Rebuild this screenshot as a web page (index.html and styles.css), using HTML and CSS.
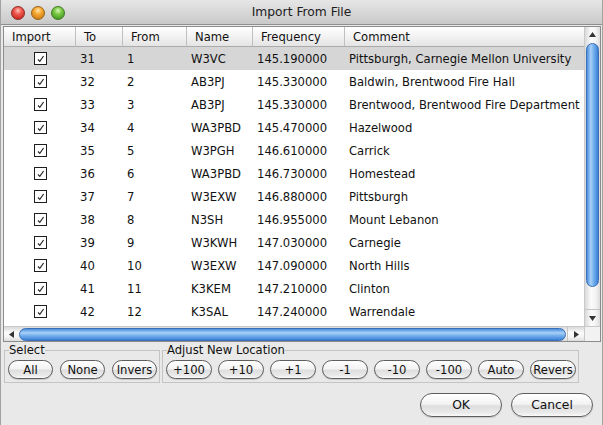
FILE: index.html
```html
<!DOCTYPE html>
<html lang="en">
<head>
    <meta charset="UTF-8">
    <title>Import From File</title>
    <link rel="stylesheet" href="styles.css">
</head>
<body>
    <div class="window">
        <div class="titlebar">
            <div class="lights">
                <span class="light red"></span>
                <span class="light yellow"></span>
                <span class="light green"></span>
            </div>
            <div class="title">Import From File</div>
        </div>

        <div class="content">
            <div class="listbox">
                <div class="viewport">
                    <table class="grid">
                        <thead>
                            <tr>
                                <th class="c-import">Import</th>
                                <th class="c-to">To</th>
                                <th class="c-from">From</th>
                                <th class="c-name">Name</th>
                                <th class="c-freq">Frequency</th>
                                <th class="c-comment">Comment</th>
                            </tr>
                        </thead>
                        <tbody id="rows"></tbody>
                    </table>
                </div>
                <div class="vscroll">
                    <div class="varrow"><svg width="7" height="5"><polygon points="0,5 7,5 3.5,0" fill="#333"/></svg></div>
                    <div class="vtrack"><div class="vthumb"></div></div>
                    <div class="varrow down"><svg width="7" height="5"><polygon points="0,0 7,0 3.5,5" fill="#333"/></svg></div>
                </div>
                <div class="hscroll">
                    <div class="harrow"><svg width="5" height="7"><polygon points="5,0 5,7 0,3.5" fill="#333"/></svg></div>
                    <div class="htrack"><div class="hthumb"></div></div>
                    <div class="harrow right"><svg width="5" height="7"><polygon points="0,0 0,7 5,3.5" fill="#333"/></svg></div>
                </div>
                <div class="corner"></div>
            </div>

            <div class="groups">
                <fieldset class="group">
                    <legend>Select</legend>
                    <div class="btns">
                        <button class="pill">All</button>
                        <button class="pill">None</button>
                        <button class="pill">Invers</button>
                    </div>
                </fieldset>
                <fieldset class="group adjust">
                    <legend>Adjust New Location</legend>
                    <div class="btns">
                        <button class="pill">+100</button>
                        <button class="pill">+10</button>
                        <button class="pill">+1</button>
                        <button class="pill">-1</button>
                        <button class="pill">-10</button>
                        <button class="pill">-100</button>
                        <button class="pill">Auto</button>
                        <button class="pill">Revers</button>
                    </div>
                </fieldset>
            </div>

            <div class="footer">
                <button class="pill big">OK</button>
                <button class="pill big">Cancel</button>
            </div>
        </div>
    </div>

    <script>
        const channels = [
            [31, 1, 'W3VC', '145.190000', 'Pittsburgh, Carnegie Mellon University'],
            [32, 2, 'AB3PJ', '145.330000', 'Baldwin, Brentwood Fire Hall'],
            [33, 3, 'AB3PJ', '145.330000', 'Brentwood, Brentwood Fire Department'],
            [34, 4, 'WA3PBD', '145.470000', 'Hazelwood'],
            [35, 5, 'W3PGH', '146.610000', 'Carrick'],
            [36, 6, 'WA3PBD', '146.730000', 'Homestead'],
            [37, 7, 'W3EXW', '146.880000', 'Pittsburgh'],
            [38, 8, 'N3SH', '146.955000', 'Mount Lebanon'],
            [39, 9, 'W3KWH', '147.030000', 'Carnegie'],
            [40, 10, 'W3EXW', '147.090000', 'North Hills'],
            [41, 11, 'K3KEM', '147.210000', 'Clinton'],
            [42, 12, 'K3SAL', '147.240000', 'Warrendale']
        ];

        const tick = '<span class="check"><svg width="11" height="11"><path d="M3 6.5 L4.8 8.3 L8.6 3" fill="none" stroke="#2a2a2a" stroke-width="1.2"/></svg></span>';

        document.getElementById('rows').innerHTML = channels
            .map((c, i) => `<tr class="${i === 0 ? 'selected' : ''}">
                <td class="mid">${tick}</td>
                <td>${c[0]}</td>
                <td>${c[1]}</td>
                <td>${c[2]}</td>
                <td>${c[3]}</td>
                <td>${c[4]}</td>
            </tr>`)
            .join('');
    </script>
</body>
</html>
```

FILE: styles.css
```css
body {
    margin: 0;
    font-family: "DejaVu Sans", sans-serif;
    font-size: 11.6px;
    color: #111;
    background: #e9e9e9;
}
.window {
    width: 603px;
    height: 425px;
    box-sizing: border-box;
    border-left: 1px solid #a2a2a2;
    border-right: 1px solid #a2a2a2;
    background: #e9e9e9;
    overflow: hidden;
}
.titlebar {
    height: 24px;
    border-bottom: 1px solid #8e8e8e;
    background: linear-gradient(#e6e6e6, #c9c9c9);
    display: grid;
    grid-template-columns: 1fr auto 1fr;
    align-items: center;
}
.lights {
    display: flex;
    gap: 6px;
    padding-left: 10px;
    padding-top: 2px;
}
.light {
    width: 14px;
    height: 14px;
    border-radius: 50%;
    box-sizing: border-box;
}
.red {
    background: radial-gradient(circle at 50% 30%, #ffc0b8 0, #f05a50 35%, #b8140c 100%);
    border: 1px solid #8e2a22;
}
.yellow {
    background: radial-gradient(circle at 50% 30%, #ffe9b0 0, #f6a934 35%, #c26d08 100%);
    border: 1px solid #98641a;
}
.green {
    background: radial-gradient(circle at 50% 30%, #d8f8b8 0, #7cc948 35%, #2f8a12 100%);
    border: 1px solid #3e7a22;
}
.title {
    font-size: 12.3px;
    color: #1c1c1c;
}

.content {
    padding: 1px 1px 0 2px;
}
.listbox {
    display: grid;
    grid-template-columns: 580px 16px;
    grid-template-rows: 299px 15px;
    border: 1px solid #8c8c8c;
    background: #fff;
}
.viewport {
    overflow: hidden;
}
.grid {
    width: 580px;
    table-layout: fixed;
    border-collapse: separate;
    border-spacing: 0;
}
.grid th, .grid td {
    box-sizing: border-box;
    white-space: nowrap;
    overflow: hidden;
    text-align: left;
}
.grid th {
    height: 20px;
    padding: 0 0 0 8px;
    font-weight: normal;
    background: linear-gradient(#ffffff, #f1f1f1 55%, #e4e4e4);
    border-bottom: 1px solid #ababab;
    border-right: 1px solid #c0c0c0;
}
.grid th.c-comment {
    border-right: none;
}
.c-import { width: 72px; }
.c-to { width: 47px; }
.c-from { width: 64px; }
.c-name { width: 66px; }
.c-freq { width: 92px; }
.c-comment { width: 239px; }
.grid td {
    height: 23px;
    padding: 0 0 0 4px;
}
.grid td.mid {
    padding: 0;
    text-align: center;
}
.grid tr.selected td {
    background: #d6d6d6;
}
.check {
    display: inline-block;
    width: 13px;
    height: 13px;
    box-sizing: border-box;
    border: 1px solid #1e1e1e;
    background: #fff;
    vertical-align: middle;
    margin-top: -2px;
}
.check svg {
    display: block;
}

.vscroll {
    display: flex;
    flex-direction: column;
    background: linear-gradient(90deg, #d9d9d9, #fbfbfb 40%, #f4f4f4 70%, #dcdcdc);
    border-left: 1px solid #c9c9c9;
}
.varrow {
    height: 14px;
    display: flex;
    align-items: center;
    justify-content: center;
}
.varrow.down {
    height: 16px;
    border-top: 1px solid #c4c4c4;
}
.vtrack {
    flex: 1;
    padding: 2px 1px 0 1px;
}
.vthumb {
    height: 242px;
    border-radius: 7px;
    border: 1px solid #3a6fb6;
    background: linear-gradient(90deg, #4a8ee0, #a9d1f7 35%, #7db6ef 55%, #4f93e2 85%, #3d7ccc);
}
.hscroll {
    display: flex;
    background: linear-gradient(#d9d9d9, #fbfbfb 40%, #f4f4f4 70%, #dcdcdc);
    border-top: 1px solid #c9c9c9;
}
.harrow {
    width: 14px;
    display: flex;
    align-items: center;
    justify-content: center;
}
.harrow.right {
    width: 16px;
    border-left: 1px solid #c4c4c4;
}
.htrack {
    flex: 1;
    padding: 1px 1px 0 1px;
}
.hthumb {
    height: 11px;
    border-radius: 7px;
    border: 1px solid #3a6fb6;
    background: linear-gradient(#4a8ee0, #a9d1f7 35%, #7db6ef 55%, #4f93e2 85%, #3d7ccc);
}
.corner {
    background: #f2f2f2;
    border-top: 1px solid #c9c9c9;
    border-left: 1px solid #c9c9c9;
}

.groups {
    display: flex;
    gap: 2px;
    margin: 1px 0 0 1px;
}
.group {
    margin: 0;
    padding: 0 2px 3px 3px;
    border: 1px solid #c4c4c4;
    min-width: 0;
}
.group legend {
    padding: 0;
    margin-left: 1px;
    line-height: 14px;
}
.btns {
    display: flex;
    gap: 7px;
    margin-top: 3px;
}
.adjust .btns {
    gap: 6px;
}
.pill {
    width: 45px;
    height: 19px;
    box-sizing: border-box;
    padding: 0;
    border: 1px solid #5e5e5e;
    border-radius: 10px;
    background: linear-gradient(#ffffff, #f3f3f3 45%, #dedede 55%, #eaeaea 85%, #fafafa);
    box-shadow: 0 1px 1px rgba(0, 0, 0, 0.15);
    font-family: "DejaVu Sans", sans-serif;
    font-size: 11.6px;
    color: #111;
    white-space: nowrap;
    overflow: hidden;
    text-align: center;
}
.adjust .pill {
    width: 46px;
}
.footer {
    display: flex;
    justify-content: flex-end;
    gap: 9px;
    margin-top: 10px;
    padding-right: 8px;
}
.big {
    width: 82px;
    height: 24px;
    border-radius: 12px;
    font-size: 12.3px;
}
```
